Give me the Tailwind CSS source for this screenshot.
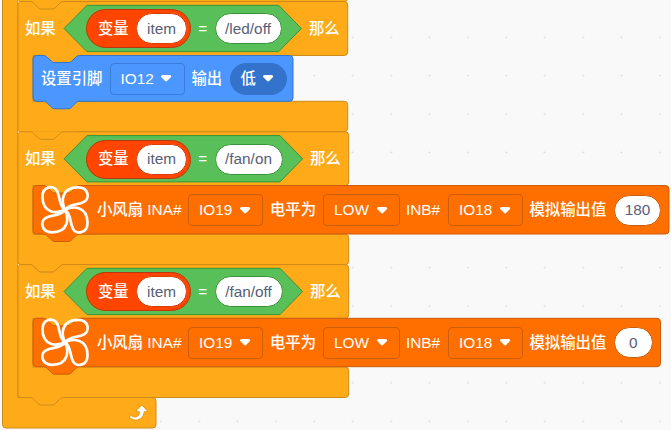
<!DOCTYPE html>
<html lang="zh-CN">
<head>
<meta charset="utf-8">
<title>Blocks</title>
<script src="https://cdn.jsdelivr.net/npm/@tailwindcss/browser@4"></script>
</head>
<body class="h-[430px] w-[671px] overflow-hidden bg-[#f9f9f9]">
<main class="relative h-[430px] w-[671px] overflow-hidden font-['Liberation_Sans','Noto_Sans_CJK_SC',sans-serif] text-[15.36px] leading-none font-medium whitespace-nowrap text-white">
  <!-- block outlines -->
  <svg class="absolute inset-0" width="671" height="430" viewBox="0 0 671 430">
    <defs>
      <pattern id="grid" width="38.4" height="38.4" patternUnits="userSpaceOnUse" x="-12.1" y="18.1">
        <path d="M18.2 19.2h2M19.2 18.2v2" stroke="#ddd" stroke-width="1"/>
      </pattern>
      <path id="caret" d="M6.36,7.79a1.43,1.43,0,0,1-1-.42L1.42,3.45a1.44,1.44,0,0,1,0-2c.56-.56,9.31-.56,9.87,0a1.44,1.44,0,0,1,0,2L7.37,7.37A1.43,1.43,0,0,1,6.36,7.79Z" fill="#fff"/>
      <path id="petal" d="M0 0C-4 -8 -4 -22.500 13 -22.500C24 -22.500 25 -11 19 -8C13 -4.500 4 -6.500 0 0Z"/>
      <g id="fan" fill="none" stroke="#fff" stroke-width="2.7" stroke-linejoin="round">
        <use href="#petal"/><use href="#petal" transform="rotate(90)"/><use href="#petal" transform="rotate(180)"/><use href="#petal" transform="rotate(270)"/>
      </g>
    </defs>
    <rect width="671" height="430" fill="url(#grid)"/>
    <rect x="18" y="0" width="80" height="397" fill="#ffab19"/>
    <g fill="#ffab19" stroke="#cf8b17" stroke-width="1">
      <path d="M2.500 -5H18V397.500H152.500q3.500 0 3.500 3.500V424.500q0 3.500-3.500 3.500H6q-3.500 0-3.500-3.500Z"/>
      <path d="M18 -8H347.700V-1.500q0 3-3.500 3H18Z" stroke="none"/>
      <path d="M347.700 -8V-1.500q0 3-3.500 3H63.500" fill="none"/>
      <path d="M18 1.500H30c2 0 3 1 4 2l3.500 3.500c1 1 2 2 4 2H52c2 0 3-1 4-2l3.500-3.500c1-1 2-2 4-2H344.200q3.500 0 3.500 3.500V52q0 3.500-3.500 3.500H33V101.300H344.200q3.500 0 3.500 3.500V128.200q0 3.500-3.500 3.500H18Z"/>
      <path d="M18 131.200H78V139H18Z" stroke="none"/>
      <path id="branch" d="M18 131.800H30c2 0 3 1 4 2l3.500 3.500c1 1 2 2 4 2H52c2 0 3-1 4-2l3.500-3.500c1-1 2-2 4-2H345.200q3.500 0 3.500 3.500V182q0 3.500-3.500 3.500H33V234.200H345.200q3.500 0 3.500 3.500V261.200q0 3.500-3.500 3.500H63.500c-2 0-3 1-4 2l-3.500 3.500c-1 1-2 2-4 2H41.500c-2 0-3-1-4-2l-3.500-3.500c-1-1-2-2-4-2H21q-3 0-3-3Z"/>
      <use href="#branch" y="132.800"/>
    </g>
    <g fill="#fff" fill-opacity=".75"><circle cx="18.500" cy="1.700" r=".8"/><circle cx="18.500" cy="132" r=".8"/><circle cx="18.500" cy="264.700" r=".8"/></g>
    <g fill="#59c059" stroke="#389438">
      <path d="M64 28.500L87 5.300H278.700L301.400 28.500L278.700 51.600H87Z"/>
      <path d="M64 158.800L87 135.600H280L302.600 158.800L280 181.900H87Z"/>
      <path d="M64 291.500L87 268.300H280L302.600 291.500L280 314.600H87Z"/>
    </g>
    <!-- notch fill inside each branch mouth -->
    <path fill="#ffab19" d="M44 54H79V64H44ZM44 184H79V195H44ZM44 317H79V328H44Z"/>
    <path fill="#4c97ff" stroke="#3373cc" d="M36.500 55.500H43.500c2 0 3 1 4 2l3.500 3.300c1 1 2 1.800 4 1.800H68c2 0 3-.8 4-1.800l3.500-3.300c1-1 2-2 4-2H289.500q3.500 0 3.500 3.500V97.800q0 3.500-3.500 3.500H79.500c-2 0-3 1-4 2l-3.500 3.500c-1 1-2 2-4 2H55c-2 0-3-1-4-2l-3.500-3.500c-1-1-2-2-4-2H36.500q-3.500 0-3.500-3.500V59q0-3.500 3.500-3.500Z"/>
    <g fill="#ff6f00" stroke="#cc5d0a">
      <path d="M36.500 185.500H43.500c2 0 3 1 4 2l3.500 3.500c1 1 2 2 4 2H68c2 0 3-1 4-2l3.500-3.500c1-1 2-2 4-2H665.500q3.500 0 3.500 3.500V230.500q0 3.500-3.500 3.500H79.500c-2 0-3 1-4 2l-3.500 3.500c-1 1-2 2-4 2H55c-2 0-3-1-4-2l-3.500-3.500c-1-1-2-2-4-2H36.500q-3.500 0-3.500-3.500V189q0-3.500 3.500-3.500Z"/>
      <path d="M36.500 318.300H43.500c2 0 3 1 4 2l3.500 3.500c1 1 2 2 4 2H68c2 0 3-1 4-2l3.500-3.500c1-1 2-2 4-2H657q3.500 0 3.500 3.500V363.200q0 3.500-3.500 3.500H79.500c-2 0-3 1-4 2l-3.500 3.500c-1 1-2 2-4 2H55c-2 0-3-1-4-2l-3.500-3.500c-1-1-2-2-4-2H36.500q-3.500 0-3.500-3.500V321.800q0-3.500 3.500-3.500Z"/>
    </g>
    <use href="#fan" x="65" y="209.800"/>
    <use href="#fan" x="65" y="342.300"/>
    <g transform="translate(125.300 400.800) scale(.96)">
      <path fill="#cf8b17" d="M23.3,11c-0.3,0.6-0.9,1-1.5,1h-1.6c-0.1,1.3-0.5,2.5-1.1,3.6c-0.9,1.7-2.3,3.2-4.1,4.1c-1.7,0.9-3.6,1.2-5.5,0.9c-1.8-0.3-3.5-1.1-4.9-2.3c-0.7-0.7-0.7-1.9,0-2.6c0.6-0.6,1.6-0.7,2.3-0.2H7c0.9,0.6,1.9,0.9,2.9,0.9s1.9-0.3,2.7-0.9c1.1-0.8,1.8-2.1,1.8-3.5h-1.5c-0.9,0-1.7-0.7-1.7-1.7c0-0.4,0.2-0.9,0.5-1.2l4.4-4.4c0.7-0.6,1.7-0.6,2.4,0L23,9.2C23.5,9.7,23.6,10.4,23.3,11z" fill-opacity=".5"/>
      <path fill="#fff" d="M21.8,11h-2.6c0,1.5-0.3,2.9-1,4.2c-0.8,1.6-2.1,2.8-3.7,3.6c-1.5,0.8-3.3,1.1-4.9,0.8c-1.6-0.2-3.2-1-4.4-2.1c-0.4-0.3-0.4-0.9-0.1-1.2c0.3-0.4,0.9-0.4,1.2-0.1c1,0.7,2.2,1.1,3.4,1.1s2.3-0.3,3.3-1c0.9-0.6,1.6-1.5,2-2.6c0.3-0.9,0.4-1.8,0.2-2.8h-2.4c-0.4,0-0.7-0.3-0.7-0.7c0-0.2,0.1-0.3,0.2-0.4l4.4-4.4c0.3-0.3,0.7-0.3,0.9,0L22,9.8c0.3,0.3,0.4,0.6,0.3,0.9S22,11,21.8,11z"/>
    </g>
  </svg>

  <!-- if: item = /led/off -->
  <div class="absolute top-[5px] left-[25px] flex h-[47px] items-center">
    <span class="w-[61px]">如果</span>
    <div class="flex h-[39px] w-[105px] items-center justify-between rounded-full border border-[#b83a0c] bg-[#ff4500] pr-[3px] pl-[11px]">
      <span>变量</span>
      <span class="flex h-[31px] w-[51px] items-center justify-center rounded-full border border-[#d63f08] bg-white text-[#575e75]">item</span>
    </div>
    <span class="w-[23.500px] text-center">=</span>
    <span class="flex h-[31px] w-[67px] items-center justify-center rounded-full border border-[#389438] bg-white text-[#575e75]">/led/off</span>
    <span class="ml-[27.500px]">那么</span>
  </div>

  <!-- set pin -->
  <div class="absolute top-[55px] left-[41px] flex h-[47px] items-center">
    <span class="w-[68.500px]">设置引脚</span>
    <span class="flex h-[32px] w-[75px] items-center justify-between rounded-[4px] border border-[#3a7ddb] pr-[11px] pl-[10px]">IO12<svg width="12.200" height="8.400" viewBox="0 0 12.71 8.79"><use href="#caret"/></svg></span>
    <span class="ml-[7px] w-[38px]">输出</span>
    <span class="flex h-[32px] w-[57px] items-center justify-between rounded-full bg-[#3373cc] pr-[12px] pl-[11px]">低<svg width="12.200" height="8.400" viewBox="0 0 12.71 8.79"><use href="#caret"/></svg></span>
  </div>

  <!-- if: item = /fan/on -->
  <div class="absolute top-[135.500px] left-[25px] flex h-[47px] items-center">
    <span class="w-[61px]">如果</span>
    <div class="flex h-[39px] w-[105px] items-center justify-between rounded-full border border-[#b83a0c] bg-[#ff4500] pr-[3px] pl-[11px]">
      <span>变量</span>
      <span class="flex h-[31px] w-[51px] items-center justify-center rounded-full border border-[#d63f08] bg-white text-[#575e75]">item</span>
    </div>
    <span class="w-[23.500px] text-center">=</span>
    <span class="flex h-[31px] w-[68px] items-center justify-center rounded-full border border-[#389438] bg-white text-[#575e75]">/fan/on</span>
    <span class="ml-[27.500px]">那么</span>
  </div>

  <!-- fan, 180 -->
  <div class="absolute top-[186px] left-[97px] flex h-[48px] items-center">
    <span class="w-[91px]">小风扇 INA#</span>
    <span class="flex h-[32px] w-[75px] items-center justify-between rounded-[4px] border border-[#cc5d0a] pr-[11px] pl-[10px]">IO19<svg width="12.200" height="8.400" viewBox="0 0 12.71 8.79"><use href="#caret"/></svg></span>
    <span class="ml-[7px] w-[53px]">电平为</span>
    <span class="flex h-[32px] w-[77px] items-center justify-between rounded-[4px] border border-[#cc5d0a] pr-[11px] pl-[10px]">LOW<svg width="12.200" height="8.400" viewBox="0 0 12.71 8.79"><use href="#caret"/></svg></span>
    <span class="ml-[6px] w-[42px]">INB#</span>
    <span class="flex h-[32px] w-[75px] items-center justify-between rounded-[4px] border border-[#cc5d0a] pr-[11px] pl-[10px]">IO18<svg width="12.200" height="8.400" viewBox="0 0 12.71 8.79"><use href="#caret"/></svg></span>
    <span class="ml-[6.500px] w-[84.500px]">模拟输出值</span>
    <span class="flex h-[31px] w-[47px] items-center justify-center rounded-full border border-[#cc5d0a] bg-white text-[#575e75]">180</span>
  </div>

  <!-- if: item = /fan/off -->
  <div class="absolute top-[268px] left-[25px] flex h-[47px] items-center">
    <span class="w-[61px]">如果</span>
    <div class="flex h-[39px] w-[105px] items-center justify-between rounded-full border border-[#b83a0c] bg-[#ff4500] pr-[3px] pl-[11px]">
      <span>变量</span>
      <span class="flex h-[31px] w-[51px] items-center justify-center rounded-full border border-[#d63f08] bg-white text-[#575e75]">item</span>
    </div>
    <span class="w-[23.500px] text-center">=</span>
    <span class="flex h-[31px] w-[68px] items-center justify-center rounded-full border border-[#389438] bg-white text-[#575e75]">/fan/off</span>
    <span class="ml-[27.500px]">那么</span>
  </div>

  <!-- fan, 0 -->
  <div class="absolute top-[318.500px] left-[97px] flex h-[48px] items-center">
    <span class="w-[91px]">小风扇 INA#</span>
    <span class="flex h-[32px] w-[75px] items-center justify-between rounded-[4px] border border-[#cc5d0a] pr-[11px] pl-[10px]">IO19<svg width="12.200" height="8.400" viewBox="0 0 12.71 8.79"><use href="#caret"/></svg></span>
    <span class="ml-[7px] w-[53px]">电平为</span>
    <span class="flex h-[32px] w-[77px] items-center justify-between rounded-[4px] border border-[#cc5d0a] pr-[11px] pl-[10px]">LOW<svg width="12.200" height="8.400" viewBox="0 0 12.71 8.79"><use href="#caret"/></svg></span>
    <span class="ml-[6px] w-[42px]">INB#</span>
    <span class="flex h-[32px] w-[75px] items-center justify-between rounded-[4px] border border-[#cc5d0a] pr-[11px] pl-[10px]">IO18<svg width="12.200" height="8.400" viewBox="0 0 12.71 8.79"><use href="#caret"/></svg></span>
    <span class="ml-[6.500px] w-[84.500px]">模拟输出值</span>
    <span class="flex h-[31px] w-[38.500px] items-center justify-center rounded-full border border-[#cc5d0a] bg-white text-[#575e75]">0</span>
  </div>
</main>
</body>
</html>
